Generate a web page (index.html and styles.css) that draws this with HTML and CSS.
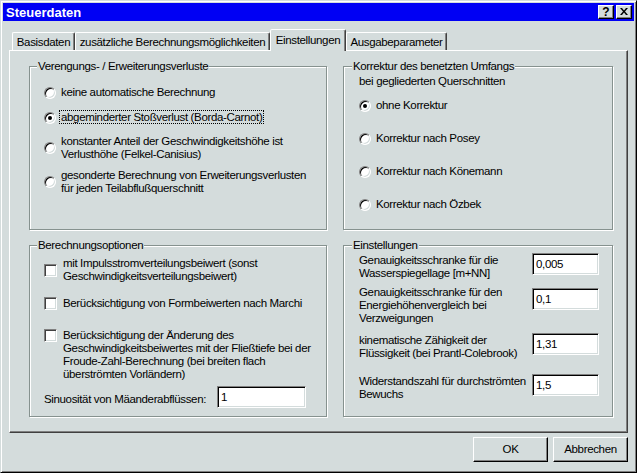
FILE: index.html
```html
<!DOCTYPE html>
<html lang="de">
<head>
<meta charset="utf-8">
<title>Steuerdaten</title>
<link rel="stylesheet" href="styles.css">
</head>
<body>
<div class="window">
  <div class="titlebar">
    <span class="title">Steuerdaten</span>
    <div class="tb-buttons">
      <span class="tb-btn help">?</span>
      <span class="tb-btn close"><svg width="8" height="7" viewBox="0 0 8 7"><path d="M0 0h2l2 2.5 2-2.5h2l-3 3.5 3 3.5h-2l-2-2.5-2 2.5h-2l3-3.5z" fill="#000"/></svg></span>
    </div>
  </div>
  <div class="body">
    <div class="tabs">
      <div class="tab t1">Basisdaten</div>
      <div class="tab t2">zusätzliche Berechnungsmöglichkeiten</div>
      <div class="tab t3 active">Einstellungen</div>
      <div class="tab t4">Ausgabeparameter</div>
    </div>
    <div class="panel">
      <div class="grid">
        <div class="group g-top">
          <span class="legend">Verengungs- / Erweiterungsverluste</span>
          <div class="opt r1"><span class="radio"></span><span class="lbl">keine automatische Berechnung</span></div>
          <div class="opt r2"><span class="radio checked"></span><span class="lbl"><span class="focus">abgeminderter Stoßverlust (Borda-Carnot)</span></span></div>
          <div class="opt r3"><span class="radio"></span><span class="lbl">konstanter Anteil der Geschwindigkeitshöhe ist<br>Verlusthöhe (Felkel-Canisius)</span></div>
          <div class="opt r4"><span class="radio"></span><span class="lbl">gesonderte Berechnung von Erweiterungsverlusten<br>für jeden Teilabflußquerschnitt</span></div>
        </div>
        <div class="group g-top right">
          <span class="legend">Korrektur des benetzten Umfangs</span>
          <div class="sublegend">bei gegliederten Querschnitten</div>
          <div class="opt k1"><span class="radio checked"></span><span class="lbl">ohne Korrektur</span></div>
          <div class="opt k2"><span class="radio"></span><span class="lbl">Korrektur nach Posey</span></div>
          <div class="opt k3"><span class="radio"></span><span class="lbl">Korrektur nach Könemann</span></div>
          <div class="opt k4"><span class="radio"></span><span class="lbl">Korrektur nach Özbek</span></div>
        </div>
        <div class="group g-bot">
          <span class="legend">Berechnungsoptionen</span>
          <div class="opt c1"><span class="check"></span><span class="lbl">mit Impulsstromverteilungsbeiwert (sonst<br>Geschwindigkeitsverteilungsbeiwert)</span></div>
          <div class="opt c2"><span class="check"></span><span class="lbl">Berücksichtigung von Formbeiwerten nach Marchi</span></div>
          <div class="opt c3 top"><span class="check"></span><span class="lbl">Berücksichtigung der Änderung des<br>Geschwindigkeitsbeiwertes mit der Fließtiefe bei der<br>Froude-Zahl-Berechnung (bei breiten flach<br>überströmten Vorländern)</span></div>
          <div class="sinus"><span class="lbl">Sinuosität von Mäanderabflüssen:</span><span class="field wide">1</span></div>
        </div>
        <div class="group g-bot right">
          <span class="legend">Einstellungen</span>
          <div class="setting s1"><span class="lbl">Genauigkeitsschranke für die<br>Wasserspiegellage [m+NN]</span><span class="field">0,005</span></div>
          <div class="setting s2"><span class="lbl">Genauigkeitsschranke für den<br>Energiehöhenvergleich bei<br>Verzweigungen</span><span class="field">0,1</span></div>
          <div class="setting s3"><span class="lbl">kinematische Zähigkeit der<br>Flüssigkeit (bei Prantl-Colebrook)</span><span class="field">1,31</span></div>
          <div class="setting s4"><span class="lbl">Widerstandszahl für durchströmten<br>Bewuchs</span><span class="field">1,5</span></div>
        </div>
      </div>
    </div>
    <div class="buttons">
      <span class="btn">OK</span>
      <span class="btn">Abbrechen</span>
    </div>
  </div>
</div>
</body>
</html>
```

FILE: styles.css
```css
* { box-sizing: border-box; }
html, body { margin: 0; padding: 0; background: #d4dcdc; }
body {
  font-family: "Liberation Sans", Arial, sans-serif;
  font-size: 11.5px;
  letter-spacing: -0.35px;
  line-height: 13px;
  color: #000;
}
.window {
  width: 637px;
  height: 473px;
  background: #d4dcdc;
  border: 1px solid;
  border-color: #d4dcdc #000 #000 #d4dcdc;
  box-shadow: inset 1px 1px #fff, inset -1px -1px #808080;
  padding: 2px;
  display: flex;
  flex-direction: column;
}
.titlebar {
  height: 18px;
  background: #0000f4;
  display: flex;
  align-items: center;
  justify-content: space-between;
  padding: 0 2px 0 3px;
}
.title {
  color: #fff;
  font-weight: bold;
  font-size: 13px;
  letter-spacing: 0;
}
.tb-buttons { display: flex; gap: 2px; }
.tb-btn {
  width: 16px;
  height: 14px;
  background: #d4dcdc;
  border: 1px solid;
  border-color: #fff #000 #000 #fff;
  box-shadow: inset -1px -1px #808080;
  display: flex;
  align-items: center;
  justify-content: center;
  font-weight: bold;
  font-size: 12px;
  letter-spacing: 0;
  line-height: 12px;
}
.tb-btn.help { padding-bottom: 1px; }
.tb-btn svg { display: block; margin-top: -1px; }
.body {
  padding: 8px 6px 0 6px;
  display: flex;
  flex-direction: column;
}
.tabs {
  display: flex;
  align-items: flex-end;
  height: 21px;
  padding-left: 3px;
  position: relative;
  z-index: 1;
}
.tab {
  height: 18px;
  border: 1px solid;
  border-bottom: none;
  border-color: #fff #404040 transparent #fff;
  box-shadow: inset -1px 0 #808080;
  border-radius: 2px 2px 0 0;
  text-align: center;
  padding-top: 3px;
  white-space: nowrap;
}
.t1 { width: 63px; }
.t2 { width: 195px; }
.t3 { width: 76px; }
.t4 { width: 101px; }
.tab.active {
  height: 22px;
  margin-bottom: -1px;
  background: #d4dcdc;
  padding-top: 4px;
}
.panel {
  height: 383px;
  border: 1px solid;
  border-color: #fff #404040 #404040 #fff;
  box-shadow: inset -1px -1px #808080;
  padding: 15px 0 0 19px;
}
.grid {
  display: grid;
  grid-template-columns: 298px 270px;
  grid-template-rows: 164px 172px;
  column-gap: 16px;
  row-gap: 15px;
}
.group {
  position: relative;
  border: 1px solid #86928f;
  box-shadow: inset 1px 1px #fff, 1px 1px #fff;
  padding-left: 14px;
}
.group.right { padding-left: 15px; }
.legend {
  position: absolute;
  top: -7px;
  left: 7px;
  background: #d4dcdc;
  padding: 0 1px;
  white-space: nowrap;
}
.group.right .legend { left: 8px; }
.sublegend { margin-top: 8px; }
.opt {
  display: flex;
  align-items: center;
  white-space: nowrap;
}
.opt.top { align-items: flex-start; }
.radio {
  flex: none;
  width: 12px;
  height: 12px;
  border-radius: 50%;
  background: #fff;
  border: 1px solid;
  border-color: #808080 #fff #fff #808080;
  box-shadow: inset 1px 1px #000, inset -1px -1px #d4dcdc;
  margin-right: 5px;
  position: relative;
}
.radio.checked::after {
  content: "";
  position: absolute;
  left: 3px;
  top: 3px;
  width: 4px;
  height: 4px;
  border-radius: 50%;
  background: #000;
}
.check {
  flex: none;
  width: 13px;
  height: 13px;
  background: #fff;
  border: 1px solid;
  border-color: #808080 #fff #fff #808080;
  box-shadow: inset 1px 1px #404040, inset -1px -1px #d4dcdc;
  margin-right: 6px;
}
.focus {
  border: 1px dotted #000;
  padding: 0 1px;
  margin-left: -2px;
}
.r1 { margin-top: 19px; }
.r2 { margin-top: 12px; }
.r3 { margin-top: 11px; }
.r4 { margin-top: 8px; }
.k1 { margin-top: 11px; }
.k2 { margin-top: 20px; }
.k3 { margin-top: 20px; }
.k4 { margin-top: 20px; }
.c1 { margin-top: 11px; }
.c2 { margin-top: 14px; }
.c3 { margin-top: 19px; }
.sinus {
  display: flex;
  align-items: center;
  margin-top: 5px;
  white-space: nowrap;
}
.sinus .lbl { padding-top: 5px; }
.field {
  flex: none;
  width: 67px;
  height: 22px;
  background: #fff;
  border: 1px solid;
  border-color: #808080 #fff #fff #808080;
  box-shadow: inset 1px 1px #000, inset -1px -1px #d4dcdc;
  padding: 4px 0 0 3px;
  white-space: nowrap;
}
.field.wide { width: 89px; margin-left: auto; margin-right: 20px; }
.setting {
  display: flex;
  justify-content: space-between;
  align-items: flex-start;
  padding-right: 13px;
  white-space: nowrap;
}
.s1 { margin-top: 8px; }
.s2 { margin-top: 6px; }
.s2 .field { margin-top: 2px; }
.s3 { margin-top: 9px; }
.s4 { margin-top: 15px; }
.s1 .field, .s3 .field, .s4 .field { margin-top: -1px; }
.buttons {
  display: flex;
  justify-content: flex-end;
  gap: 5px;
  margin-top: 4px;
}
.btn {
  width: 75px;
  height: 25px;
  border: 1px solid;
  border-color: #fff #000 #000 #fff;
  box-shadow: inset -1px -1px #808080;
  display: flex;
  align-items: center;
  justify-content: center;
}
```
